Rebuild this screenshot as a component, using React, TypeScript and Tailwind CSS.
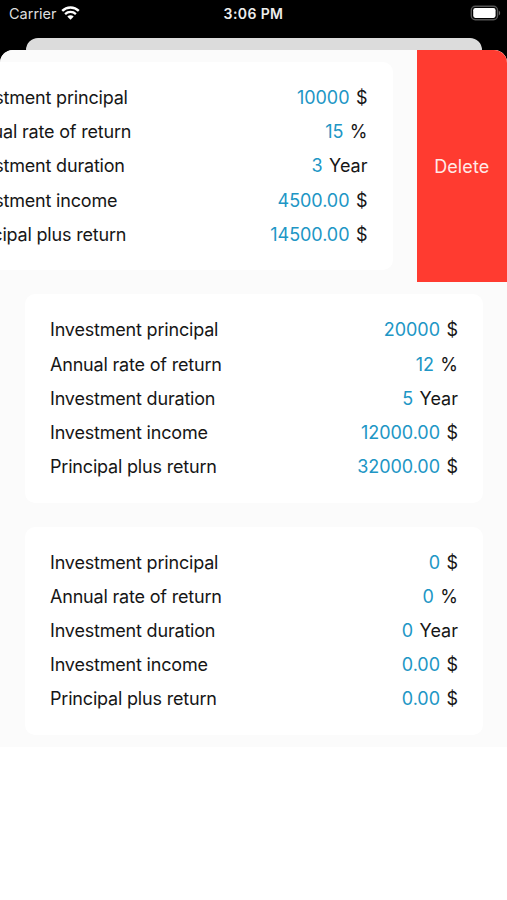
type Investment = {
  principal: string;
  rate: string;
  duration: string;
  income: string;
  total: string;
};

const investments: Investment[] = [
  { principal: "10000", rate: "15", duration: "3", income: "4500.00", total: "14500.00" },
  { principal: "20000", rate: "12", duration: "5", income: "12000.00", total: "32000.00" },
  { principal: "0", rate: "0", duration: "0", income: "0.00", total: "0.00" },
];

function StatusBar() {
  return (
    <div className="grid h-[38px] grid-cols-3 items-start pt-[3px] text-white">
      <div className="flex h-[21px] items-center gap-[4.5px] pl-[9px]">
        <span className="text-[14.5px] leading-[21px] text-[#dedede]">Carrier</span>
        <svg width="19" height="14" viewBox="0 0 19 14" fill="none" stroke="#fff" className="-mt-px">
          <path d="M1.2 4.9C5.8.3 13.2.3 17.8 4.9" strokeWidth="2.4" />
          <path d="M4.1 8.1C7.1 5.2 11.9 5.2 14.9 8.1" strokeWidth="2.3" />
          <path d="M9.5 13.8 6.3 10.5c1.8-1.6 4.6-1.6 6.4 0Z" fill="#fff" stroke="none" />
        </svg>
      </div>
      <span className="text-center text-[14px] font-semibold leading-[22px] tracking-[0.4px] text-[#ededed]">3:06 PM</span>
      <div className="flex h-[21px] items-start justify-end pr-[6px] pt-[2px]">
        <svg width="31" height="16" viewBox="0 0 31 16">
          <rect x="1.3" y="1.3" width="26.2" height="13.4" rx="4" fill="none" stroke="#555" strokeWidth="1.4" />
          <rect x="3.2" y="3.1" width="22.4" height="9.8" rx="2.1" fill="#fff" />
          <path d="M28.8 5.8v4.6c1.8-.6 1.8-4 0-4.6Z" fill="#666" />
        </svg>
      </div>
    </div>
  );
}

function Row({ label, value, unit }: { label: string; value: string; unit: string }) {
  return (
    <div className="flex h-[34.2px] items-center justify-between whitespace-nowrap">
      <span className="tracking-[-0.19px]">{label}</span>
      <span className="flex gap-[6.5px]">
        <span className="tracking-[-0.06px] text-[#2096c5]">{value}</span>
        <span>{unit}</span>
      </span>
    </div>
  );
}

function Card({ item }: { item: Investment }) {
  return (
    <div className="h-full w-[508px] shrink-0 px-[25px] py-[12px]">
      <div className="h-full rounded-[10px] bg-white px-[25px] pt-[18.5px]">
        <Row label="Investment principal" value={item.principal} unit="$" />
        <Row label="Annual rate of return" value={item.rate} unit="%" />
        <Row label="Investment duration" value={item.duration} unit="Year" />
        <Row label="Investment income" value={item.income} unit="$" />
        <Row label="Principal plus return" value={item.total} unit="$" />
      </div>
    </div>
  );
}

export default function App() {
  return (
    <div className="flex h-[900px] w-[507px] flex-col overflow-hidden bg-black font-['Inter','Liberation_Sans',sans-serif] text-[18px] text-[#161616]">
      <StatusBar />
      <div className="ml-[26px] mr-[25px] h-[12px] shrink-0 rounded-t-[12px] bg-[#dcdcdc]" />
      <main className="flex-1 overflow-hidden rounded-t-[13px] bg-white">
        {investments.map((item, index) => (
          <div key={item.principal} className="flex h-[232.3px] overflow-hidden bg-[#fbfbfb]">
            {index === 0 ? (
              <>
                <div className="flex w-[416.5px] shrink-0 justify-end">
                  <div className="-mr-px flex justify-end">
                    <Card item={item} />
                  </div>
                </div>
                <button className="relative flex-1 bg-[#ff3b30] text-[18px] tracking-[0.1px] text-[#ffe9e7]">Delete</button>
              </>
            ) : (
              <Card item={item} />
            )}
          </div>
        ))}
      </main>
    </div>
  );
}
